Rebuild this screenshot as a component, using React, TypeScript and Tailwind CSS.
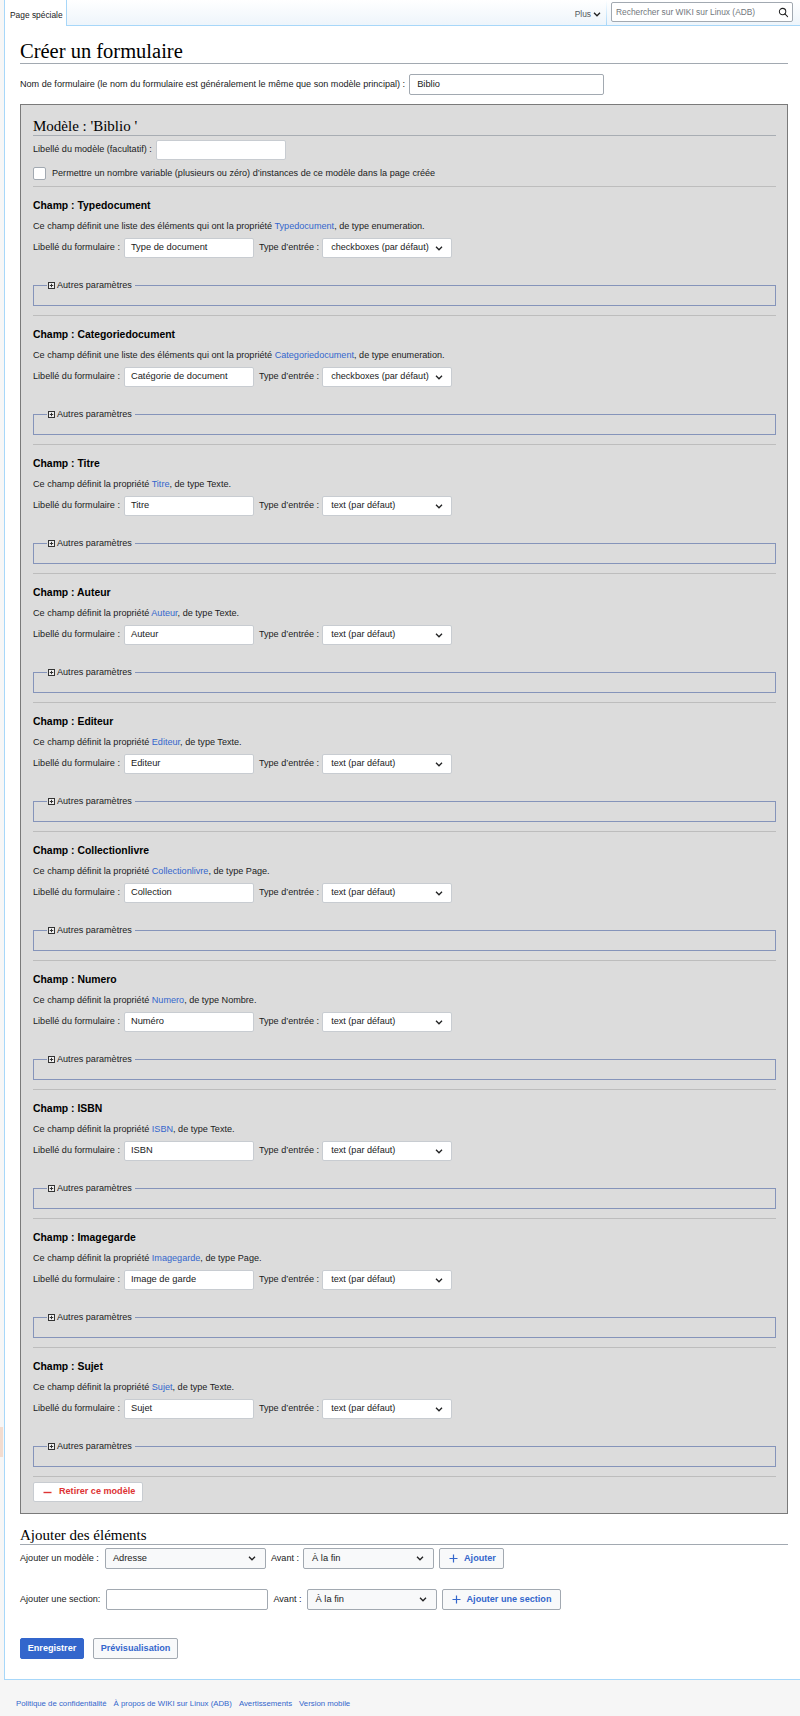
import React from "react";

type Sec = { name: string; list: boolean; type: string; label: string; input: string };

const sections: Sec[] = [
  { name: "Typedocument", list: true, type: "enumeration", label: "Type de document", input: "checkboxes (par défaut)" },
  { name: "Categoriedocument", list: true, type: "enumeration", label: "Catégorie de document", input: "checkboxes (par défaut)" },
  { name: "Titre", list: false, type: "Texte", label: "Titre", input: "text (par défaut)" },
  { name: "Auteur", list: false, type: "Texte", label: "Auteur", input: "text (par défaut)" },
  { name: "Editeur", list: false, type: "Texte", label: "Editeur", input: "text (par défaut)" },
  { name: "Collectionlivre", list: false, type: "Page", label: "Collection", input: "text (par défaut)" },
  { name: "Numero", list: false, type: "Nombre", label: "Numéro", input: "text (par défaut)" },
  { name: "ISBN", list: false, type: "Texte", label: "ISBN", input: "text (par défaut)" },
  { name: "Imagegarde", list: false, type: "Page", label: "Image de garde", input: "text (par défaut)" },
  { name: "Sujet", list: false, type: "Texte", label: "Sujet", input: "text (par défaut)" },
];

function Chevron() {
  return (
    <svg width="8" height="5" viewBox="0 0 8 5" className="shrink-0">
      <path d="M1 0.8l3 3 3-3" fill="none" stroke="#202122" strokeWidth="1.3" />
    </svg>
  );
}

function PlusIcon({ color }: { color: string }) {
  return (
    <svg width="9" height="9" viewBox="0 0 9 9" className="shrink-0">
      <path d="M4.5 0.5v8M0.5 4.5h8" stroke={color} strokeWidth="1.2" fill="none" />
    </svg>
  );
}

function BoxPlus() {
  return (
    <svg width="7" height="7" viewBox="0 0 7 7" className="shrink-0">
      <rect x="0.5" y="0.5" width="6" height="6" fill="#f0f0f0" stroke="#333" strokeWidth="1" />
      <path d="M3.5 1.8v3.4M1.8 3.5h3.4" stroke="#333" strokeWidth="1" fill="none" />
    </svg>
  );
}

function Section({ s }: { s: Sec }) {
  return (
    <div>
      <div className="mt-[12px] leading-[14px] text-[10.4px] font-bold text-black">Champ&nbsp;: {s.name}</div>
      <div className="mt-[6px] leading-[14px]">
        {s.list ? "Ce champ définit une liste des éléments qui ont la propriété " : "Ce champ définit la propriété "}
        <span className="text-[#3366cc]">{s.name}</span>, de type {s.type}.
      </div>
      <div className="mt-[5px] flex items-center h-[20px]">
        <span>Libellé du formulaire&nbsp;:</span>
        <div className="ml-[4px] w-[130px] h-[20px] bg-white border border-[#c8ccd1] rounded-[2px] flex items-center pl-[6px] text-[9.3px]">
          {s.label}
        </div>
        <span className="ml-[5px]">Type d’entrée&nbsp;:</span>
        <div className="ml-[3px] w-[130px] h-[20px] bg-white border border-[#c8ccd1] rounded-[2px] flex items-center justify-between pl-[8px] pr-[8px] text-[9.1px]">
          <span>{s.input}</span>
          <Chevron />
        </div>
      </div>
      <div className="mt-[27px] h-[21px] border border-[#8594ba] relative">
        <div className="absolute top-[-7px] left-[13px] pl-[1px] pr-[3px] bg-[#dcdcdc] flex items-center gap-[2px] leading-[12px]">
          <BoxPlus />
          <span>Autres paramètres</span>
        </div>
      </div>
      <div className="mt-[9px] h-px bg-[#bdbdbd]" />
    </div>
  );
}

export default function App() {
  return (
    <div className="min-h-[1716px] bg-[#f6f6f6] flex font-['Liberation_Sans',Arial,sans-serif] text-[#202122] text-[9.1px]">
      <div className="w-[4px] shrink-0">
        <div className="mt-[1427px] h-[30px] w-[3px] bg-[#f3dccf]" />
      </div>
      <div className="flex-1 min-w-0 flex flex-col">
        <div className="border-l border-[#a7d7f9]">
          {/* header */}
          <div className="h-[26px] flex">
            <div className="w-[62px] h-full bg-white border-r border-[#a7d7f9] flex items-center pl-[5px] text-[8.4px] leading-[10px] pt-[4px]">
              Page spéciale
            </div>
            <div className="flex-1 h-full border-b border-[#a7d7f9] bg-linear-to-b from-white to-[#eef5fb] flex items-center justify-end">
              <div className="flex items-center gap-[2px] text-[8.4px] text-[#54595d] pt-[4px]">
                <span>Plus</span>
                <Chevron />
              </div>
              <div className="ml-[5px] w-px h-full bg-linear-to-b from-white to-[#a7d7f9]" />
              <div className="ml-[4px] mr-[7px] w-[182px] h-[20px] bg-white border border-[#a2a9b1] rounded-[2px] flex items-center justify-between pl-[4px] pr-[3px] mt-[-1px]">
                <span className="text-[8.4px] text-[#72777d]">Rechercher sur WIKI sur Linux (ADB)</span>
                <svg width="11" height="11" viewBox="0 0 24 24" fill="none" stroke="#202122" strokeWidth="2.2" strokeLinecap="round">
                  <circle cx="10" cy="10" r="7" />
                  <path d="M15 15l6 6" />
                </svg>
              </div>
            </div>
          </div>

          {/* content */}
          <div className="bg-white border-b border-[#a7d7f9] pl-[15px] pr-[12px] pt-[13px] pb-[20px]">
            <h1 className="font-['Liberation_Serif',serif] text-[20.5px] leading-[24px] border-b border-[#a2a9b1] text-black">
              Créer un formulaire
            </h1>
            <div className="mt-[10px] flex items-center h-[21px]">
              <span>Nom de formulaire (le nom du formulaire est généralement le même que son modèle principal)&nbsp;:</span>
              <div className="ml-[4px] w-[195px] h-[21px] bg-white border border-[#a2a9b1] rounded-[2px] flex items-center pl-[7px] text-[9.3px]">
                Biblio
              </div>
            </div>

            <div className="mt-[9px] border border-[#7a7a7a] bg-[#dcdcdc] pl-[12px] pr-[11px] pt-[12px] pb-[11px]">
              <h2 className="font-['Liberation_Serif',serif] text-[15px] leading-[18px] border-b border-[#a8adb3] text-black">
                Modèle&nbsp;: 'Biblio '
              </h2>
              <div className="mt-[4px] flex items-center h-[20px]">
                <span>Libellé du modèle (facultatif)&nbsp;:</span>
                <div className="ml-[4px] w-[130px] h-[20px] bg-white border border-[#c8ccd1] rounded-[2px]" />
              </div>
              <div className="mt-[7px] flex items-center h-[13px]">
                <div className="w-[13px] h-[13px] bg-white border border-[#a2a9b1] rounded-[2px]" />
                <span className="ml-[6px]">Permettre un nombre variable (plusieurs ou zéro) d’instances de ce modèle dans la page créée</span>
              </div>
              <div className="mt-[6px] h-px bg-[#bdbdbd]" />

              {sections.map((s) => (
                <Section key={s.name} s={s} />
              ))}

              <div className="mt-[5px] w-[110px] h-[20px] bg-white border border-[#c8ccd1] rounded-[2px] flex items-center pl-[9px] gap-[7px]">
                <svg width="9" height="9" viewBox="0 0 9 9" className="shrink-0">
                  <path d="M0.5 4.5h8" stroke="#d33" strokeWidth="1.4" />
                </svg>
                <span className="font-bold text-[#d33] text-[9.1px]">Retirer ce modèle</span>
              </div>
            </div>

            <h2 className="mt-[12px] font-['Liberation_Serif',serif] text-[15px] leading-[18px] border-b border-[#a2a9b1] text-black">
              Ajouter des éléments
            </h2>
            <div className="mt-[3px] flex items-center h-[21px]">
              <span>Ajouter un modèle&nbsp;:</span>
              <div className="ml-[6px] w-[161px] h-[21px] bg-[#f8f9fa] border border-[#a2a9b1] rounded-[2px] flex items-center justify-between pl-[7px] pr-[9px] text-[9.3px]">
                <span>Adresse</span>
                <Chevron />
              </div>
              <span className="ml-[5px]">Avant&nbsp;:</span>
              <div className="ml-[4px] w-[131px] h-[21px] bg-[#f8f9fa] border border-[#a2a9b1] rounded-[2px] flex items-center justify-between pl-[8px] pr-[9px] text-[9.3px]">
                <span>À la fin</span>
                <Chevron />
              </div>
              <div className="ml-[5px] w-[65px] h-[21px] bg-[#f8f9fa] border border-[#a2a9b1] rounded-[2px] flex items-center pl-[9px] gap-[6px]">
                <PlusIcon color="#3366cc" />
                <span className="font-bold text-[#3366cc]">Ajouter</span>
              </div>
            </div>
            <div className="mt-[20px] flex items-center h-[21px]">
              <span>Ajouter une section:</span>
              <div className="ml-[6px] w-[162px] h-[21px] bg-white border border-[#a2a9b1] rounded-[2px]" />
              <span className="ml-[5px]">Avant&nbsp;:</span>
              <div className="ml-[5px] w-[130px] h-[21px] bg-[#f8f9fa] border border-[#a2a9b1] rounded-[2px] flex items-center justify-between pl-[8px] pr-[9px] text-[9.3px]">
                <span>À la fin</span>
                <Chevron />
              </div>
              <div className="ml-[5px] w-[119px] h-[21px] bg-[#f8f9fa] border border-[#a2a9b1] rounded-[2px] flex items-center pl-[9px] gap-[6px]">
                <PlusIcon color="#3366cc" />
                <span className="font-bold text-[#3366cc]">Ajouter une section</span>
              </div>
            </div>
            <div className="mt-[28px] flex items-center">
              <div className="w-[64px] h-[21px] bg-[#3366cc] border border-[#3366cc] rounded-[2px] flex items-center justify-center font-bold text-white">
                Enregistrer
              </div>
              <div className="ml-[9px] w-[85px] h-[21px] bg-[#f8f9fa] border border-[#a2a9b1] rounded-[2px] flex items-center justify-center font-bold text-[#3366cc]">
                Prévisualisation
              </div>
            </div>
          </div>
        </div>
        {/* footer */}
        <div className="mt-[18px] pl-[12px] flex gap-[7px] text-[7.8px] leading-[12px] text-[#3366cc]">
          <span>Politique de confidentialité</span>
          <span>À propos de WIKI sur Linux (ADB)</span>
          <span>Avertissements</span>
          <span>Version mobile</span>
        </div>
      </div>
    </div>
  );
}
